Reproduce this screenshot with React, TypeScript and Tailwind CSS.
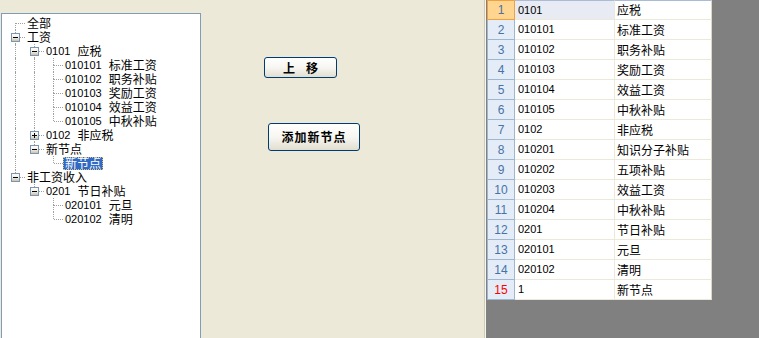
import React from "react";

type Row = {
  level: number;
  code?: string;
  name: string;
  exp?: "minus" | "plus";
  guides: boolean[];
  hasNext: boolean;
  firstRoot?: boolean;
  selected?: boolean;
};

const rows: Row[] = [
  { level: 0, name: "全部", guides: [], hasNext: true, firstRoot: true },
  { level: 0, name: "工资", exp: "minus", guides: [], hasNext: true },
  { level: 1, code: "0101", name: "应税", exp: "minus", guides: [true], hasNext: true },
  { level: 2, code: "010101", name: "标准工资", guides: [true, true], hasNext: true },
  { level: 2, code: "010102", name: "职务补贴", guides: [true, true], hasNext: true },
  { level: 2, code: "010103", name: "奖励工资", guides: [true, true], hasNext: true },
  { level: 2, code: "010104", name: "效益工资", guides: [true, true], hasNext: true },
  { level: 2, code: "010105", name: "中秋补贴", guides: [true, true], hasNext: false },
  { level: 1, code: "0102", name: "非应税", exp: "plus", guides: [true], hasNext: true },
  { level: 1, name: "新节点", exp: "minus", guides: [true], hasNext: false },
  { level: 2, name: "新节点", guides: [true, false], hasNext: false, selected: true },
  { level: 0, name: "非工资收入", exp: "minus", guides: [], hasNext: false },
  { level: 1, code: "0201", name: "节日补贴", exp: "minus", guides: [false], hasNext: false },
  { level: 2, code: "020101", name: "元旦", guides: [false, false], hasNext: true },
  { level: 2, code: "020102", name: "清明", guides: [false, false], hasNext: false },
];

const grid: [string, string][] = [
  ["0101", "应税"],
  ["010101", "标准工资"],
  ["010102", "职务补贴"],
  ["010103", "奖励工资"],
  ["010104", "效益工资"],
  ["010105", "中秋补贴"],
  ["0102", "非应税"],
  ["010201", "知识分子补贴"],
  ["010202", "五项补贴"],
  ["010203", "效益工资"],
  ["010204", "中秋补贴"],
  ["0201", "节日补贴"],
  ["020101", "元旦"],
  ["020102", "清明"],
  ["1", "新节点"],
];

function Expander({ plus }: { plus: boolean }) {
  return (
    <svg width="9" height="9" viewBox="0 0 9 9" className="absolute left-[5px] top-[3px]">
      <defs>
        <linearGradient id="expg" x1="0" y1="0" x2="0" y2="1">
          <stop offset="0" stopColor="#ffffff" />
          <stop offset="0.5" stopColor="#f2efe6" />
          <stop offset="1" stopColor="#c4bca9" />
        </linearGradient>
      </defs>
      <rect x="0.5" y="0.5" width="8" height="8" fill="url(#expg)" stroke="#7a96b3" />
      <path d="M2 4.5H7" stroke="#000" strokeWidth="1" />
      {plus && <path d="M4.5 2V7" stroke="#000" strokeWidth="1" />}
    </svg>
  );
}

function TreeRow({ r }: { r: Row }) {
  const cells = Array.from({ length: r.level + 1 });
  return (
    <div className="flex h-[14px] items-center">
      {cells.map((_, i) => (
        <div key={i} className="relative h-full w-[19px] shrink-0">
          {i < r.level ? (
            r.guides[i] && (
              <div className="absolute left-[9px] top-0 bottom-0 border-l border-dotted border-[#a0a0a0]" />
            )
          ) : (
            <>
              {!r.firstRoot && (
                <div className="absolute left-[9px] top-0 h-[7px] border-l border-dotted border-[#a0a0a0]" />
              )}
              {r.hasNext && (
                <div className="absolute left-[9px] top-[7px] bottom-0 border-l border-dotted border-[#a0a0a0]" />
              )}
              <div className="absolute left-[10px] right-0 top-[7px] border-t border-dotted border-[#a0a0a0]" />
              {r.exp && <Expander plus={r.exp === "plus"} />}
            </>
          )}
        </div>
      ))}
      <div
        className={
          r.selected
            ? "flex h-[13px] items-center bg-[#316ac5] px-[2px] leading-none text-white outline-1 outline-dotted outline-[#d9c27a] -outline-offset-1"
            : "flex h-[13px] items-center px-[2px] leading-none text-black"
        }
      >
        {r.code && (
          <span className="font-['Liberation_Sans',sans-serif] text-[11px]">{r.code}</span>
        )}
        <span
          className={
            r.code
              ? "ml-[7px] font-['Noto_Sans_CJK_SC',sans-serif] text-[12px]"
              : "font-['Noto_Sans_CJK_SC',sans-serif] text-[12px]"
          }
        >
          {r.name}
        </span>
      </div>
    </div>
  );
}

function GridRow({ idx, code, name }: { idx: number; code: string; name: string }) {
  const first = idx === 1;
  const last = idx === 15;
  return (
    <div className="flex h-[20px]">
      <div
        className={
          first
            ? "flex w-[28px] items-center justify-center border-x border-y border-[#f0a040] bg-[#ffd58f] font-['Liberation_Sans',sans-serif] text-[12px] text-[#4672a8]"
            : last
            ? "flex w-[28px] items-center justify-center border-x border-b border-[#9eb6ce] bg-[#e4ecf7] font-['Liberation_Sans',sans-serif] text-[12px] text-[#ff0000]"
            : "flex w-[28px] items-center justify-center border-x border-b border-[#9eb6ce] bg-[#e4ecf7] font-['Liberation_Sans',sans-serif] text-[12px] text-[#4672a8]"
        }
      >
        {idx}
      </div>
      <div
        className={
          first
            ? "flex w-[100px] items-center border-r border-y border-r-[#ece9d8] border-b-[#ece9d8] border-t-[#a9bcd6] bg-[#e8ebf3] pl-[3px] font-['Liberation_Sans',sans-serif] text-[11px] text-black"
            : "flex w-[100px] items-center border-r border-b border-[#ece9d8] bg-white pl-[3px] font-['Liberation_Sans',sans-serif] text-[11px] text-black"
        }
      >
        {code}
      </div>
      <div
        className={
          first
            ? "flex w-[97px] items-center border-r border-y border-r-[#dcd8c6] border-b-[#ece9d8] border-t-[#a9bcd6] bg-white pl-[2px] font-['Noto_Sans_CJK_SC',sans-serif] text-[12px] leading-none text-black"
            : "flex w-[97px] items-center border-r border-b border-r-[#dcd8c6] border-b-[#ece9d8] bg-white pl-[2px] font-['Noto_Sans_CJK_SC',sans-serif] text-[12px] leading-none text-black"
        }
      >
        {name}
      </div>
    </div>
  );
}

export default function App() {
  return (
    <div className="flex h-[338px] w-[759px] overflow-hidden bg-[#ece9d8]">
      {/* Tree */}
      <div className="w-[201px] shrink-0 pl-[1px] pt-[13px]">
        <div className="h-[340px] w-[200px] border border-[#7f9db9] bg-white pl-[4px] pt-[2px]">
          {rows.map((r, i) => (
            <TreeRow key={i} r={r} />
          ))}
        </div>
      </div>

      {/* Middle buttons */}
      <div className="flex w-[283px] shrink-0 flex-col items-start">
        <button className="ml-[63px] mt-[57px] flex h-[21px] w-[73px] items-center justify-center gap-[11px] rounded-[3px] border border-[#003c74] bg-linear-to-b from-white via-[#f7f6f1] to-[#e2ded0] font-['Noto_Sans_CJK_SC',sans-serif] text-[12px] font-bold leading-none text-black">
          <span>上</span>
          <span>移</span>
        </button>
        <button className="ml-[67px] mt-[45px] flex h-[28px] w-[92px] items-center justify-center rounded-[3px] border border-[#003c74] bg-linear-to-b from-white via-[#f7f6f1] to-[#e2ded0] font-['Noto_Sans_CJK_SC',sans-serif] text-[12px] font-bold leading-none tracking-[1px] text-black">
          添加新节点
        </button>
      </div>

      {/* Splitter */}
      <div className="w-px shrink-0 bg-[#cfcbbb]" />
      <div className="w-px shrink-0 bg-[#f7f5ee]" />

      {/* Grid panel */}
      <div className="flex-1 bg-[#808080] pl-[1px]">
        <div className="w-[225px]">
          {grid.map(([c, n], i) => (
            <GridRow key={i} idx={i + 1} code={c} name={n} />
          ))}
        </div>
      </div>
    </div>
  );
}
